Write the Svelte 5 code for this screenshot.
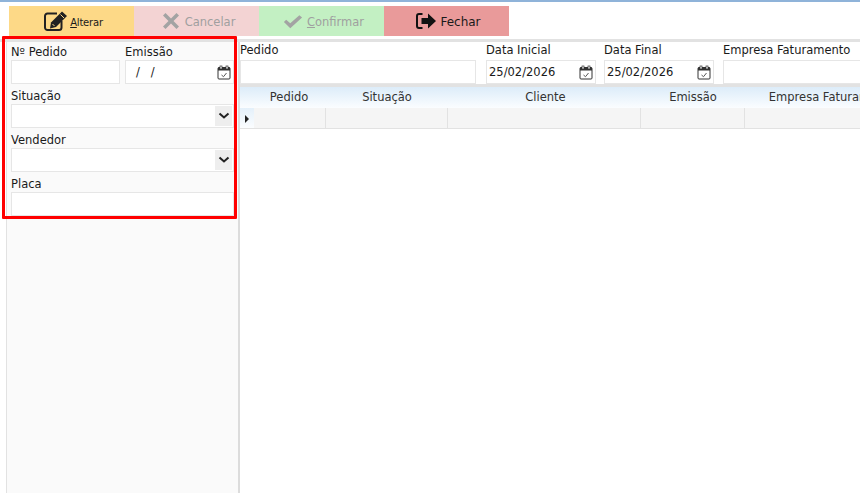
<script>
  const columns = [
    { title: 'Pedido', width: 72 },
    { title: 'Situação', width: 122 },
    { title: 'Cliente', width: 193 },
    { title: 'Emissão', width: 104 },
    { title: 'Empresa Faturamento', width: 175 }
  ];
</script>

{#snippet calendar()}
  <svg class="cal" viewBox="0 0 14 15" aria-hidden="true">
    <rect x="1" y="2.5" width="12" height="11.5" rx="1" fill="#fff" stroke="#333" stroke-width="1"/>
    <rect x="1" y="2.5" width="12" height="3" fill="#333"/>
    <rect x="3" y="1" width="2" height="3" fill="#fff" stroke="#333" stroke-width=".7"/>
    <rect x="9" y="1" width="2" height="3" fill="#fff" stroke="#333" stroke-width=".7"/>
    <path d="M4.5 10l2 1.700L9.500 8" fill="none" stroke="#555" stroke-width="1"/>
  </svg>
{/snippet}

{#snippet chevron()}
  <span class="drop">
    <svg viewBox="0 0 12 8" aria-hidden="true">
      <path d="M1.500 1.500L6 5.500l4.500-4" fill="none" stroke="#222" stroke-width="2"/>
    </svg>
  </span>
{/snippet}

<div class="screen">
  <div class="topline"></div>

  <div class="toolbar">
    <button class="btn alterar">
      <svg class="icon pen" viewBox="0 0 24 20" aria-hidden="true">
        <path d="M13 2.500H3.500A2.500 2.500 0 0 0 1 5v11.500A2.500 2.500 0 0 0 3.500 19H15a2.500 2.500 0 0 0 2.500-2.500V10" fill="none" stroke="#222" stroke-width="2"/>
        <path d="M7 11.500L18 .5l5 4.500L12 16l-6 1.500z" fill="#222"/>
        <path d="M8.500 13l2 2M16.500 3.500l3.500 3.500" stroke="#fdd987" stroke-width="1"/>
      </svg>
      <span class="lbl small"><u>A</u>lterar</span>
    </button>
    <button class="btn cancelar">
      <svg class="icon x" viewBox="0 0 18 18" aria-hidden="true">
        <path d="M3.500 1L9 6.500 14.500 1 17 3.500 11.500 9 17 14.500 14.500 17 9 11.500 3.500 17 1 14.500 6.500 9 1 3.500z" fill="#a3a3a3"/>
      </svg>
      <span class="lbl off">Cancelar</span>
    </button>
    <button class="btn confirmar">
      <svg class="icon check" viewBox="0 0 22 16" aria-hidden="true">
        <path d="M1 8.500L3.500 6 8 10 18 1l3 2.500L8 15.500z" fill="#a3a3a3"/>
      </svg>
      <span class="lbl off"><u>C</u>onfirmar</span>
    </button>
    <button class="btn fechar">
      <svg class="icon exit" viewBox="0 0 20 16" aria-hidden="true">
        <path d="M6.500 1H3A2 2 0 0 0 1 3v10a2 2 0 0 0 2 2h3.500" fill="none" stroke="#111" stroke-width="2"/>
        <path d="M5.500 5h6.500V.5L20 8l-8 7.500V11H5.500z" fill="#111"/>
      </svg>
      <span class="lbl wide">Fechar</span>
    </button>
  </div>

  <div class="content">
    <aside class="side">
      <div class="filters">
        <div class="row two">
          <div class="field">
            <span class="label">Nº Pedido</span>
            <div class="input"></div>
          </div>
          <div class="field">
            <span class="label">Emissão</span>
            <div class="input"><span class="mask">/&nbsp;&nbsp;&nbsp;/</span>{@render calendar()}</div>
          </div>
        </div>
        <div class="field">
          <span class="label">Situação</span>
          <div class="input">{@render chevron()}</div>
        </div>
        <div class="field">
          <span class="label">Vendedor</span>
          <div class="input">{@render chevron()}</div>
        </div>
        <div class="field">
          <span class="label">Placa</span>
          <div class="input"></div>
        </div>
      </div>
    </aside>

    <main class="main">
      <div class="search">
        <div class="field pedido">
          <span class="label">Pedido</span>
          <div class="input"></div>
        </div>
        <div class="field date">
          <span class="label">Data Inicial</span>
          <div class="input"><span class="value">25/02/2026</span>{@render calendar()}</div>
        </div>
        <div class="field date">
          <span class="label">Data Final</span>
          <div class="input"><span class="value">25/02/2026</span>{@render calendar()}</div>
        </div>
        <div class="field empresa">
          <span class="label">Empresa Faturamento</span>
          <div class="input"></div>
        </div>
      </div>

      <div class="grid">
        <div class="ghead">
          <div class="indicator"></div>
          {#each columns as col}
            <div class="hcell" style="width: {col.width}px">{col.title}</div>
          {/each}
        </div>
        <div class="grow">
          <div class="indicator"><span class="arrow"></span></div>
          {#each columns as col}
            <div class="cell" style="width: {col.width}px"></div>
          {/each}
        </div>
      </div>
    </main>
  </div>
</div>

<style>
  :global(body) {
    margin: 0;
    background: #fff;
    overflow: hidden;
  }

  .screen {
    width: 860px;
    height: 493px;
    overflow: hidden;
    display: flex;
    flex-direction: column;
    font-family: "DejaVu Sans", sans-serif;
    font-size: 11.5px;
    color: #1a1a1a;
  }

  .topline {
    height: 2px;
    background: #8fb3d9;
    flex: none;
  }

  /* ── Toolbar ─────────────────────────────── */
  .toolbar {
    display: flex;
    flex: none;
    padding: 4px 0 3px 9px;
    height: 30px;
  }

  .btn {
    width: 125px;
    height: 30px;
    border: none;
    padding: 0 0 0 4px;
    display: flex;
    align-items: center;
    justify-content: center;
    gap: 4px;
    font: inherit;
    color: inherit;
  }

  .alterar { background: #fdd987; gap: 2px; }
  .cancelar { background: #f3d3d3; gap: 5px; }
  .confirmar { background: #c3f0c3; }
  .fechar { background: #e99a9a; }

  .lbl { margin-top: 2px; }
  .lbl.off { color: #a0a0a0; }
  .lbl.small { font-size: 10px; letter-spacing: -0.2px; }
  .lbl.wide { font-size: 12px; }

  .icon { flex: none; }
  .icon.pen { width: 24px; height: 20px; }
  .icon.x { width: 18px; height: 18px; }
  .icon.check { width: 20px; height: 15px; }
  .icon.exit { width: 20px; height: 16px; }

  /* ── Body ────────────────────────────────── */
  .content {
    flex: 1;
    display: flex;
    min-height: 0;
    border-top: 3px solid #e2e2e2;
  }

  .side {
    width: 234px;
    margin-left: 6px;
    flex: none;
    box-sizing: border-box;
    background: #fafafa;
    border-left: 1px solid #e2e2e2;
    border-right: 2px solid #dcdcdc;
  }

  .filters {
    margin: -6px 0 0 -5px;
    border: 3px solid #f00;
    border-radius: 1px;
    box-sizing: border-box;
    width: 235px;
    height: 183px;
    padding: 5px 0 0 6px;
    display: flex;
    flex-direction: column;
    gap: 4px;
    position: relative;
  }

  .row.two {
    display: flex;
    gap: 5px;
  }

  .row.two .field:first-child { width: 109px; }
  .row.two .field:last-child { width: 109px; }

  .field {
    display: flex;
    flex-direction: column;
    height: 40px;
  }

  .label {
    height: 16px;
    line-height: 16px;
    white-space: nowrap;
  }

  .input {
    height: 24px;
    box-sizing: border-box;
    background: #fff;
    border: 1px solid #e6e6e6;
    display: flex;
    align-items: center;
  }

  .mask {
    margin-left: 10px;
  }

  .value { margin-left: 2px; }

  .cal {
    width: 14px;
    height: 15px;
    margin-left: auto;
    margin-right: 2px;
  }

  .drop {
    margin-left: auto;
    margin-right: 1px;
    width: 17px;
    height: 20px;
    background: #eeeeee;
    display: flex;
    align-items: center;
    justify-content: center;
  }

  .drop svg { width: 12px; height: 8px; }

  /* ── Right side ──────────────────────────── */
  .main {
    flex: 1;
    min-width: 0;
    display: flex;
    flex-direction: column;
    overflow: hidden;
  }

  .search {
    display: flex;
    flex: none;
    height: 42px;
    border-bottom: 3px solid #e2e2e2;
  }

  .search .field { height: 42px; flex: none; }
  .search .label { height: 18px; }
  .search .pedido { width: 236px; margin-right: 10px; }
  .search .date { width: 110px; margin-right: 8px; }
  .search .empresa { width: 160px; margin-left: 1px; }

  .grid { flex: none; }

  .ghead {
    display: flex;
    height: 21px;
    background: linear-gradient(#dcecf9, #fbfdff);
  }

  .indicator {
    width: 14px;
    flex: none;
    position: relative;
  }

  .hcell {
    flex: none;
    box-sizing: border-box;
    text-align: center;
    line-height: 21px;
    white-space: nowrap;
    color: #333;
  }

  .hcell:nth-child(2) { padding-right: 2px; }
  .hcell:nth-child(4) { padding-left: 2px; }

  .grow {
    display: flex;
    height: 21px;
    box-sizing: border-box;
    border-bottom: 1px solid #e2e2e2;
  }

  .grow .indicator {
    background: linear-gradient(#e4f0fa, #fbfdff);
  }

  .cell {
    flex: none;
    box-sizing: border-box;
    background: #f5f5f5;
    border-right: 1px solid #e2e2e2;
  }

  .arrow {
    position: absolute;
    left: 5px;
    top: 7px;
    border-left: 4px solid #222;
    border-top: 4px solid transparent;
    border-bottom: 4px solid transparent;
  }
</style>
